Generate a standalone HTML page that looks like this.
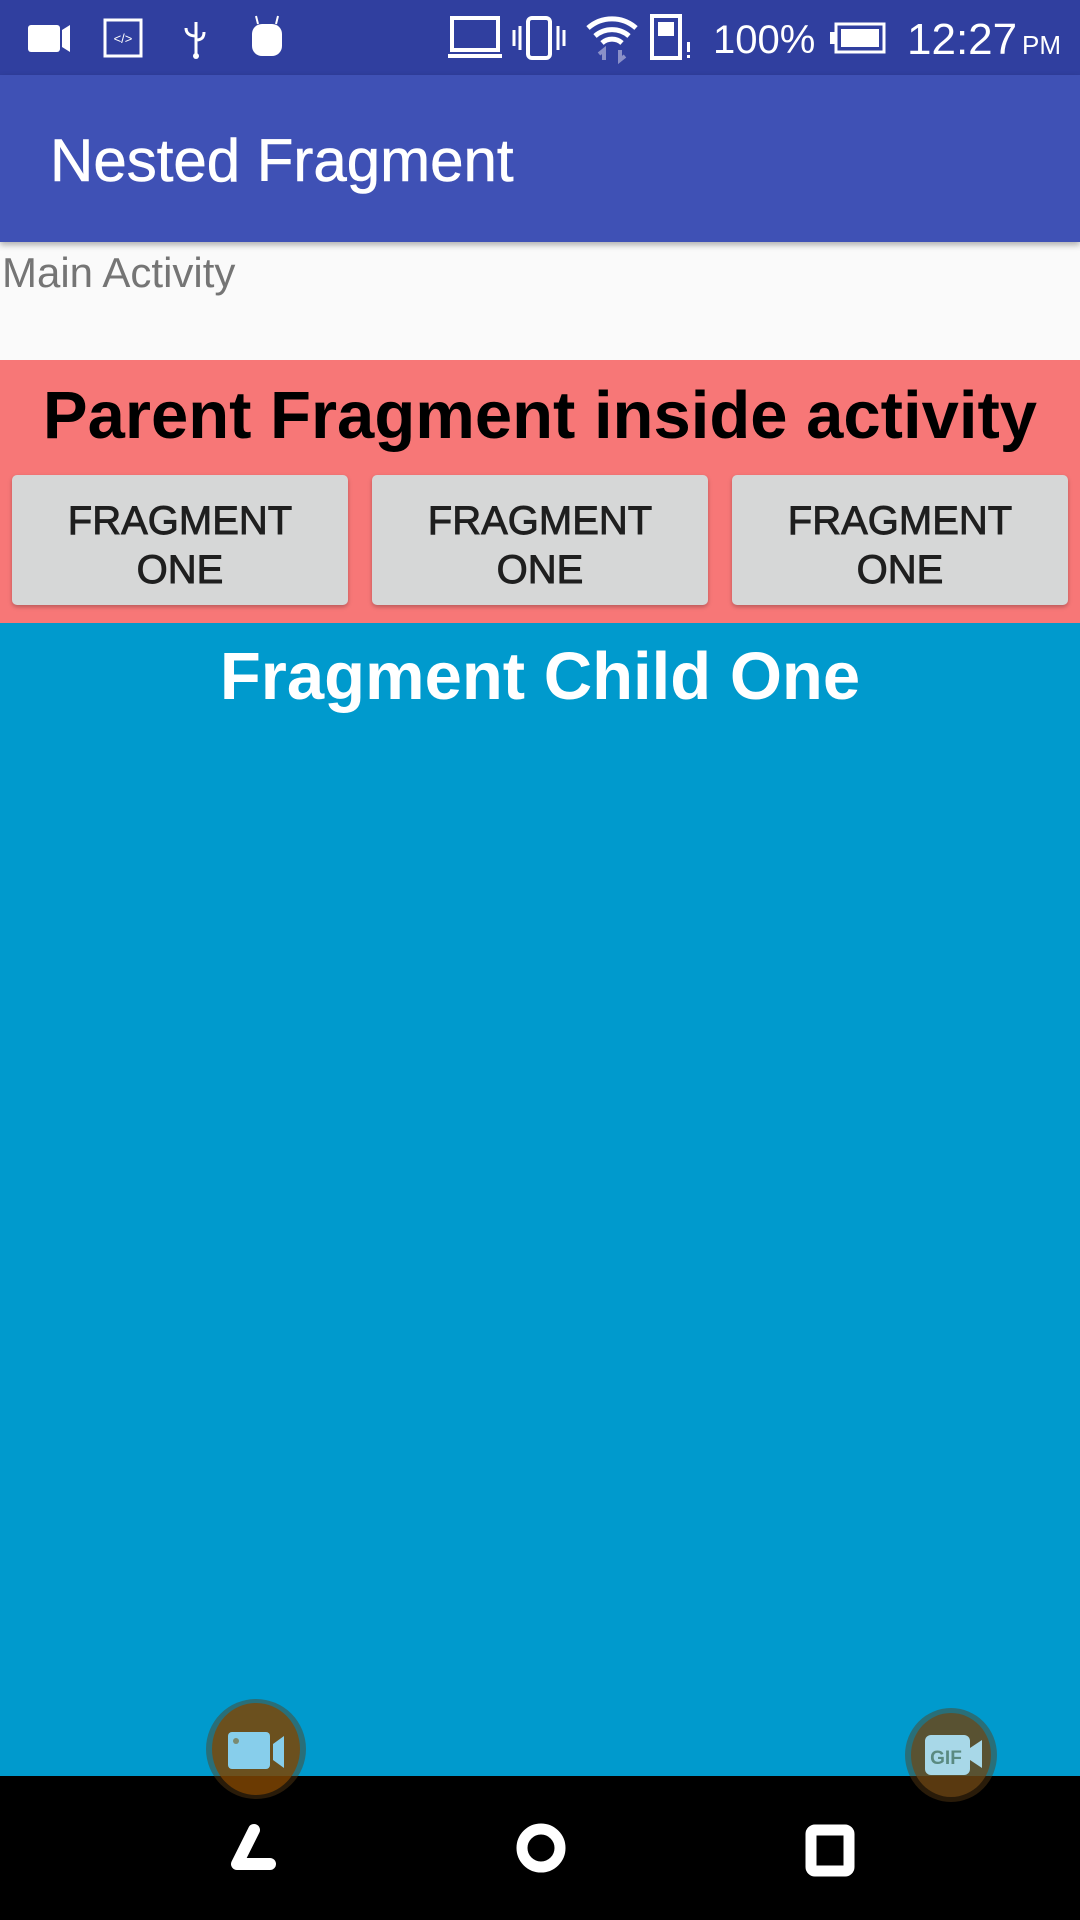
<!DOCTYPE html>
<html><head><meta charset="utf-8"><style>
*{margin:0;padding:0;box-sizing:border-box}
body{width:1080px;height:1920px;overflow:hidden;position:relative;font-family:"Liberation Sans",sans-serif;background:#fafafa}
.abs{position:absolute}
.status{left:0;top:0;width:1080px;height:75px;background:#303F9F;color:#fff}
.bar{left:0;top:75px;width:1080px;height:167px;background:#3F51B5;box-shadow:0 3px 6px rgba(0,0,0,.3);z-index:2}
.pink{left:0;top:360px;width:1080px;height:263px;background:#F77777}
.btn{top:475px;width:336px;height:130px;background:#d6d7d7;border-radius:5px;box-shadow:0 2px 4px rgba(0,0,0,.25);color:#1f1f1f;font-size:40px;font-weight:normal;-webkit-text-stroke:0.9px #1f1f1f;text-align:center;line-height:49px;padding-top:22px;letter-spacing:0}
.blue{left:0;top:623px;width:1080px;height:1153px;background:#009ACD}
.nav{left:0;top:1776px;width:1080px;height:144px;background:#000}
</style></head><body>
<div class="abs status">
<svg class="abs" style="left:0;top:0" width="1080" height="75" fill="#fff">
<rect x="28" y="25" width="32" height="27" rx="3"/><polygon points="62,30 70,25 70,52 62,47"/>
<rect x="105" y="20" width="36" height="36" fill="none" stroke="#fff" stroke-width="3"/><text x="123" y="43" font-size="13" text-anchor="middle" font-family="Liberation Sans">&lt;/&gt;</text>
<path d="M196 22v34M196 36c-8 0-10-4-10-8M196 40c6 0 8-3 8-8" stroke="#fff" stroke-width="3" fill="none"/><circle cx="196" cy="56" r="3"/>
<rect x="252" y="24" width="30" height="32" rx="10"/><path d="M258 24l-2-8M276 24l2-8" stroke="#fff" stroke-width="2"/>
<rect x="452" y="18" width="46" height="32" fill="none" stroke="#fff" stroke-width="4"/><rect x="448" y="54" width="54" height="4"/>
<rect x="528" y="18" width="22" height="40" rx="4" fill="none" stroke="#fff" stroke-width="4"/><path d="M520 26v24M558 26v24M514 30v16M564 30v16" stroke="#fff" stroke-width="3"/>
<path d="M588 28a36 36 0 0 1 48 0M595 36a26 26 0 0 1 34 0M602 43a15 15 0 0 1 20 0" stroke="#fff" stroke-width="5" fill="none"/><path d="M604 60v-10l-5 4M620 50v10l5-4" stroke="#8a90c8" stroke-width="4" fill="none"/>
<rect x="652" y="16" width="28" height="42" fill="none" stroke="#fff" stroke-width="4"/><rect x="658" y="22" width="16" height="14"/><rect x="687" y="42" width="3" height="10"/><rect x="687" y="55" width="3" height="3"/>
<text x="713" y="53" font-size="40" font-family="Liberation Sans">100%</text>
<rect x="836" y="24" width="48" height="28" fill="none" stroke="#fff" stroke-width="3"/><rect x="841" y="29" width="38" height="18"/><rect x="830" y="32" width="6" height="12"/>
<text x="907" y="54" font-size="44" font-family="Liberation Sans">12:27</text><text x="1022" y="54" font-size="26" font-family="Liberation Sans">PM</text>
</svg></div>
<div class="abs bar"><div class="abs" style="left:50px;top:56px;font-size:60px;color:#fff;line-height:60px;white-space:nowrap;-webkit-text-stroke:0.6px #fff">Nested Fragment</div></div>
<div class="abs" style="left:2px;top:252px;font-size:42px;color:#757575;line-height:42px">Main Activity</div>
<div class="abs pink">
<div class="abs" style="left:0;width:1080px;top:16px;text-align:center;font-size:67px;font-weight:bold;color:#000;line-height:80px;white-space:nowrap">Parent Fragment inside activity</div>
</div>
<div class="abs btn" style="left:12px">FRAGMENT<br>ONE</div>
<div class="abs btn" style="left:372px">FRAGMENT<br>ONE</div>
<div class="abs btn" style="left:732px">FRAGMENT<br>ONE</div>
<div class="abs blue"><div class="abs" style="left:0;width:1080px;top:14px;text-align:center;font-size:67px;font-weight:bold;color:#fff;line-height:80px;white-space:nowrap">Fragment Child One</div></div>
<div class="abs nav"></div>
<svg class="abs" style="left:0;top:1680px" width="1080" height="240">
<ellipse cx="256" cy="69" rx="50" ry="50" fill="rgba(90,60,20,.45)"/><ellipse cx="256" cy="69" rx="44" ry="46" fill="rgba(130,70,0,.75)"/>
<rect x="228" y="52" width="42" height="37" rx="4" fill="#87CEEB"/><polygon points="273,64 284,56 284,88 273,80" fill="#87CEEB"/><circle cx="236" cy="61" r="3" fill="#7a8a70"/>
<ellipse cx="951" cy="75" rx="46" ry="47" fill="rgba(90,60,20,.45)"/><ellipse cx="951" cy="75" rx="40" ry="42" fill="rgba(110,70,20,.7)"/>
<rect x="925" y="55" width="45" height="40" rx="6" fill="#a8d8e8"/><polygon points="970,68 982,60 982,88 970,80" fill="#a8d8e8"/>
<text x="946" y="84" font-size="19" font-weight="bold" fill="#5a8a80" text-anchor="middle" font-family="Liberation Sans">GIF</text>
<path d="M254 150l-17 34h33" stroke="#fff" stroke-width="12" fill="none" stroke-linecap="round" stroke-linejoin="round"/>
<circle cx="541" cy="168" r="19" fill="none" stroke="#fff" stroke-width="11"/>
<rect x="811" y="150" width="38" height="41" rx="4" fill="none" stroke="#fff" stroke-width="11"/>
</svg>
</body></html>
